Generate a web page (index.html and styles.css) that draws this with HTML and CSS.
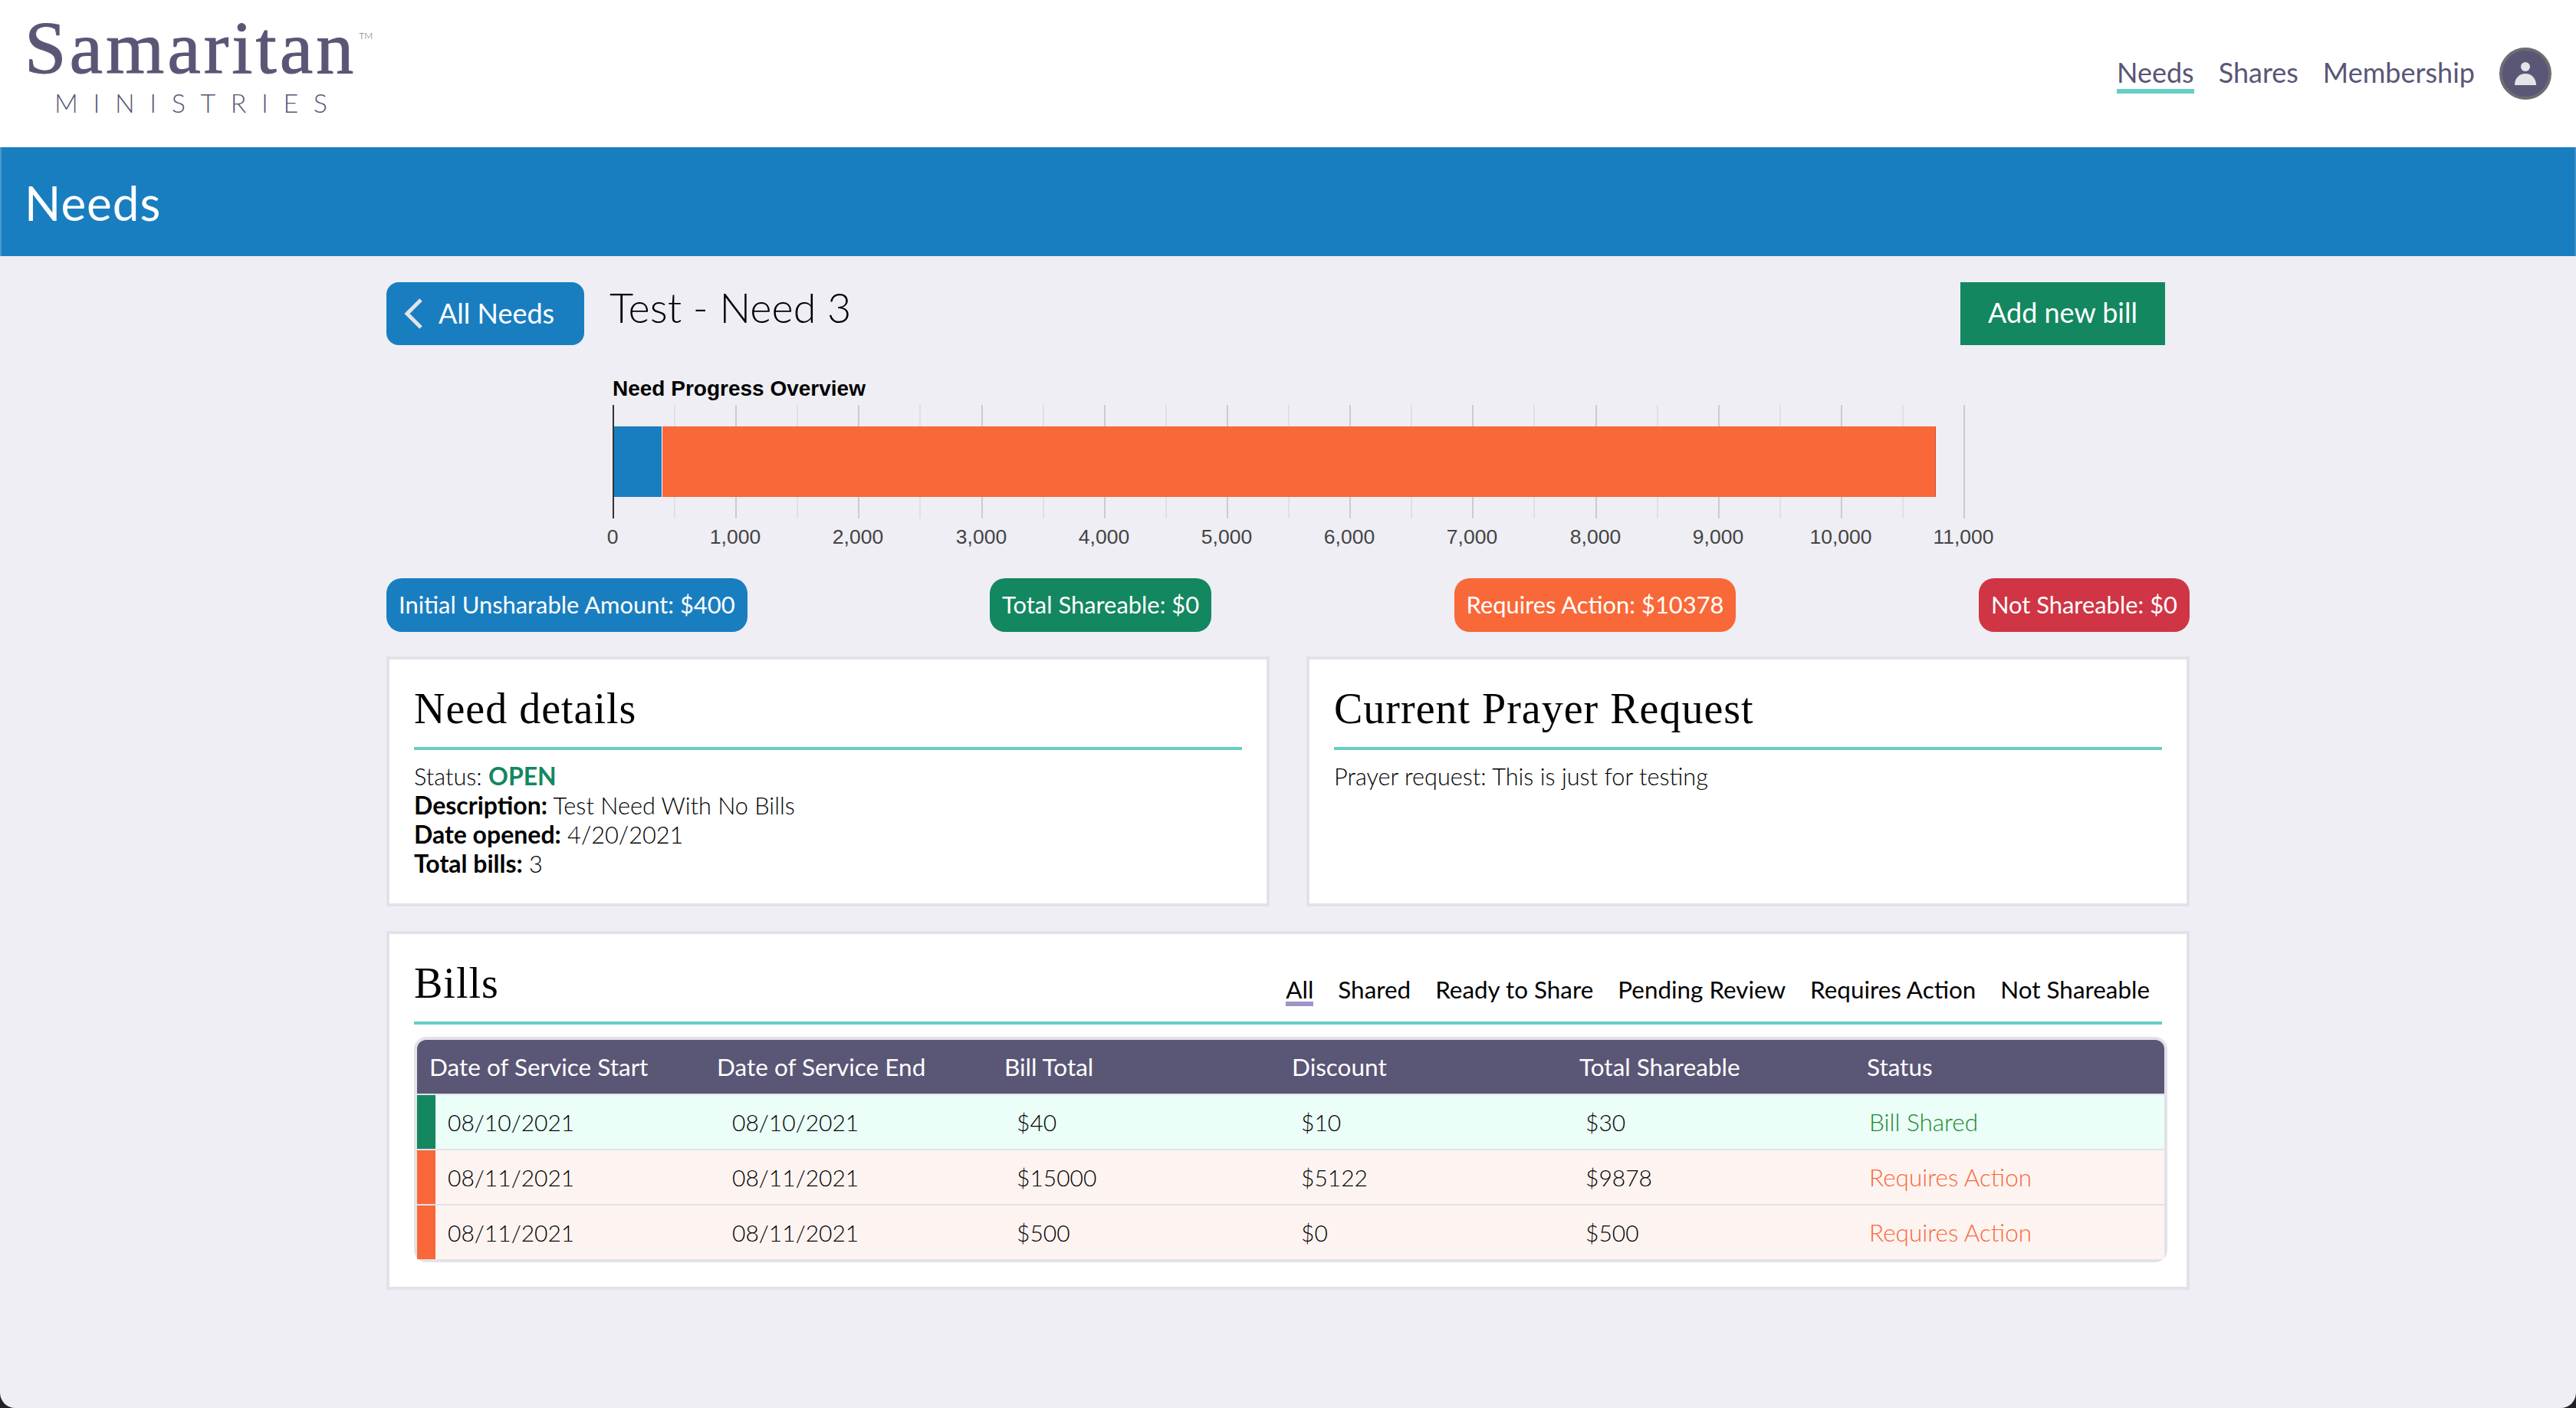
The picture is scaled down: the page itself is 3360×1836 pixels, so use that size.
FILE: index.html
```html
<!DOCTYPE html>
<html lang="en">
<head>
  <meta charset="UTF-8">
  <title>Needs</title>
  <link rel="stylesheet" href="styles.css">
</head>
<body>
  <header class="topbar">
    <div class="logo">
      <div class="logo-name">Samaritan<sup class="logo-tm">TM</sup></div>
      <div class="logo-sub">MINISTRIES</div>
    </div>
    <nav class="nav">
      <a class="nav-link active">Needs</a>
      <a class="nav-link">Shares</a>
      <a class="nav-link">Membership</a>
      <div class="avatar">
        <svg width="28" height="30" viewBox="0 0 28 30">
          <circle cx="14" cy="6" r="6" fill="#e3e3ea"/>
          <path d="M0 30 C0 21 6 15 14 15 C22 15 28 21 28 30 Z" fill="#e3e3ea"/>
        </svg>
      </div>
    </nav>
  </header>

  <div class="banner">Needs</div>

  <main class="content">
    <div class="title-row">
      <a class="back-btn">
        <svg width="26" height="42" viewBox="0 0 26 42">
          <path d="M23 3 L5 21 L23 39" fill="none" stroke="#e3e3ea" stroke-width="5"/>
        </svg>
        All Needs
      </a>
      <h1 class="need-title">Test - Need 3</h1>
      <a class="add-btn">Add new bill</a>
    </div>

    <div class="chart">
      <div class="chart-title">Need Progress Overview</div>
      <div class="plot">
        <span class="grid minor" style="left: 80px"></span>
        <span class="grid" style="left: 160px"></span>
        <span class="grid minor" style="left: 240px"></span>
        <span class="grid" style="left: 320px"></span>
        <span class="grid minor" style="left: 400px"></span>
        <span class="grid" style="left: 481px"></span>
        <span class="grid minor" style="left: 561px"></span>
        <span class="grid" style="left: 641px"></span>
        <span class="grid minor" style="left: 721px"></span>
        <span class="grid" style="left: 801px"></span>
        <span class="grid minor" style="left: 881px"></span>
        <span class="grid" style="left: 961px"></span>
        <span class="grid minor" style="left: 1041px"></span>
        <span class="grid" style="left: 1121px"></span>
        <span class="grid minor" style="left: 1201px"></span>
        <span class="grid" style="left: 1282px"></span>
        <span class="grid minor" style="left: 1362px"></span>
        <span class="grid" style="left: 1442px"></span>
        <span class="grid minor" style="left: 1522px"></span>
        <span class="grid" style="left: 1602px"></span>
        <span class="grid minor" style="left: 1682px"></span>
        <span class="grid" style="left: 1762px"></span>
        <div class="bar">
          <div class="bar-blue" style="width: 65px"></div>
          <div class="bar-orange" style="width: 1661px"></div>
        </div>
        <span class="axis"></span>
      </div>
      <div class="ticks">
        <span class="tick" style="left: 0">0</span>
        <span class="tick" style="left: 160px">1,000</span>
        <span class="tick" style="left: 320px">2,000</span>
        <span class="tick" style="left: 481px">3,000</span>
        <span class="tick" style="left: 641px">4,000</span>
        <span class="tick" style="left: 801px">5,000</span>
        <span class="tick" style="left: 961px">6,000</span>
        <span class="tick" style="left: 1121px">7,000</span>
        <span class="tick" style="left: 1282px">8,000</span>
        <span class="tick" style="left: 1442px">9,000</span>
        <span class="tick" style="left: 1602px">10,000</span>
        <span class="tick" style="left: 1762px">11,000</span>
      </div>
    </div>

    <div class="pills">
      <span class="pill pill-blue">Initial Unsharable Amount: $400</span>
      <span class="pill pill-green">Total Shareable: $0</span>
      <span class="pill pill-orange">Requires Action: $10378</span>
      <span class="pill pill-red">Not Shareable: $0</span>
    </div>

    <div class="cards">
      <section class="card">
        <h2 class="card-title">Need details</h2>
        <div class="details">
          <div>Status: <strong class="open">OPEN</strong></div>
          <div><strong>Description:</strong> Test Need With No Bills</div>
          <div><strong>Date opened:</strong> 4/20/2021</div>
          <div><strong>Total bills:</strong> 3</div>
        </div>
      </section>
      <section class="card">
        <h2 class="card-title">Current Prayer Request</h2>
        <div class="details">Prayer request: This is just for testing</div>
      </section>
    </div>

    <section class="card bills">
      <div class="bills-head">
        <h2 class="bills-title">Bills</h2>
        <div class="filters">
          <a class="filter active">All</a>
          <a class="filter">Shared</a>
          <a class="filter">Ready to Share</a>
          <a class="filter">Pending Review</a>
          <a class="filter">Requires Action</a>
          <a class="filter">Not Shareable</a>
        </div>
      </div>
      <div class="table">
        <div class="thead">
          <div>Date of Service Start</div>
          <div>Date of Service End</div>
          <div>Bill Total</div>
          <div>Discount</div>
          <div>Total Shareable</div>
          <div>Status</div>
        </div>
        <div class="row row-shared">
          <div>08/10/2021</div>
          <div>08/10/2021</div>
          <div>$40</div>
          <div>$10</div>
          <div>$30</div>
          <div class="state">Bill Shared</div>
        </div>
        <div class="row row-action">
          <div>08/11/2021</div>
          <div>08/11/2021</div>
          <div>$15000</div>
          <div>$5122</div>
          <div>$9878</div>
          <div class="state">Requires Action</div>
        </div>
        <div class="row row-action">
          <div>08/11/2021</div>
          <div>08/11/2021</div>
          <div>$500</div>
          <div>$0</div>
          <div>$500</div>
          <div class="state">Requires Action</div>
        </div>
      </div>
    </section>
  </main>
</body>
</html>
```

FILE: styles.css
```css
* {
  box-sizing: border-box;
}

html, body {
  height: 100%;
}

html {
  background-color: #222;
}

body {
  margin: 0;
  background-color: #eeeef4;
  border-radius: 0 0 20px 20px;
  font-family: Lato, 'Open Sans', sans-serif;
  color: #000;
  overflow: hidden;
}

/* top bar */
.topbar {
  height: 192px;
  background-color: #fff;
  display: flex;
  justify-content: space-between;
  padding: 24px 32px 0 32px;
}

.logo {
  color: #5a5676;
}

.logo-name {
  font-family: 'Liberation Serif', serif;
  font-size: 98px;
  line-height: 76px;
  letter-spacing: 4px;
  -webkit-text-stroke: 1px #5a5676;
}

.logo-tm {
  font-family: Lato, sans-serif;
  font-size: 12px;
  font-weight: 300;
  letter-spacing: 0;
  line-height: 0;
  vertical-align: 44px;
  -webkit-text-stroke: 0;
  margin-left: 3px;
}

.logo-sub {
  font-weight: 300;
  font-size: 34px;
  line-height: 40px;
  letter-spacing: 19.6px;
  padding-left: 39px;
  margin-top: 14px;
}

.nav {
  display: flex;
  align-items: flex-start;
  gap: 32px;
  padding-top: 38px;
  color: #5a5676;
  font-size: 36px;
}

.nav-link {
  height: 60px;
  padding-top: 11px;
  line-height: 43px;
  border-bottom: 6px solid transparent;
}

.nav-link.active {
  border-bottom-color: #67cdc7;
}

.avatar {
  width: 68px;
  height: 68px;
  border-radius: 50%;
  background-color: #5a5676;
  border: 4px solid #6c6c72;
  display: flex;
  align-items: center;
  justify-content: center;
}

/* blue page banner */
.banner {
  height: 142px;
  background-color: #197ec0;
  border-left: 2px solid #4a97cc;
  border-right: 2px solid #3d90c8;
  color: #fff;
  font-size: 62px;
  letter-spacing: 1px;
  line-height: 144px;
  padding-left: 30px;
}

.content {
  width: 2352px;
  margin-left: 504px;
  padding-top: 34px;
}

.title-row {
  display: flex;
  align-items: flex-start;
  padding-right: 32px;
}

.back-btn {
  width: 258px;
  height: 82px;
  background-color: #197ec0;
  color: #fff;
  border-radius: 16px;
  font-size: 36px;
  display: flex;
  align-items: center;
  gap: 20px;
  padding: 0 0 3px 22px;
}

.back-btn svg {
  margin-top: 3px;
}

.need-title {
  flex: 1;
  margin: 0 0 0 33px;
  font-size: 54px;
  font-weight: 300;
  line-height: 66px;
}

.add-btn {
  width: 267px;
  height: 82px;
  background-color: #13875f;
  color: #fff;
  font-size: 36px;
  line-height: 79px;
  text-align: center;
}

/* chart */
.chart {
  margin-top: 40px;
  margin-left: 295px;
  height: 244px;
}

.chart-title {
  font-family: 'Liberation Sans', sans-serif;
  font-weight: bold;
  font-size: 28px;
  line-height: 34px;
  height: 38px;
}

.plot {
  position: relative;
  height: 148px;
}

.grid {
  position: absolute;
  top: 0;
  bottom: 0;
  width: 2px;
  background-color: #ccc;
}

.grid.minor {
  background-color: #e0e0e4;
}

.axis {
  position: absolute;
  left: 0;
  top: 0;
  bottom: 0;
  width: 2px;
  background-color: #333;
}

.bar {
  position: absolute;
  left: 0;
  top: 28px;
  height: 92px;
  display: flex;
}

.bar-blue {
  background-color: #197ec0;
  border-right: 1px solid #fff;
}

.bar-orange {
  background-color: #f96838;
  border-right: 1px solid #d84a2a;
}

.ticks {
  position: relative;
  height: 40px;
  margin-top: 4px;
}

.tick {
  position: absolute;
  top: 0;
  transform: translateX(-50%);
  font-family: 'Liberation Sans', sans-serif;
  font-size: 26.5px;
  line-height: 40px;
  color: #444;
}

/* summary pills */
.pills {
  display: flex;
  justify-content: space-between;
  margin-top: 20px;
}

.pill {
  height: 70px;
  border-radius: 20px;
  color: #fff;
  font-size: 30.9px;
  line-height: 70px;
  padding: 0 16px;
}

.pill-blue {
  background-color: #197ec0;
}

.pill-green {
  background-color: #13875f;
}

.pill-orange {
  background-color: #f96838;
}

.pill-red {
  background-color: #cf3545;
}

/* cards */
.cards {
  display: flex;
  gap: 48px;
  margin-top: 32px;
}

.card {
  flex: 1;
  height: 326px;
  background-color: #fff;
  border: 4px solid #e2e2e9;
  padding: 0 32px;
}

.card-title {
  margin: 0;
  height: 118px;
  padding-top: 11px;
  border-bottom: 4px solid #67cdc7;
  font-family: 'Liberation Serif', serif;
  font-weight: normal;
  font-size: 56px;
  line-height: 106px;
  letter-spacing: 1px;
}

.details {
  margin-top: 16px;
  font-size: 30.7px;
  font-weight: 300;
  line-height: 38px;
}

.details strong {
  font-size: 32px;
  font-weight: 700;
  line-height: 1;
}

.open {
  color: #13875f;
}

/* bills table */
.bills {
  height: 468px;
  margin-top: 32px;
}

.bills-head {
  height: 118px;
  border-bottom: 4px solid #67cdc7;
  display: flex;
  justify-content: space-between;
}

.bills-title {
  margin: 0;
  padding-top: 11px;
  font-family: 'Liberation Serif', serif;
  font-weight: normal;
  font-size: 56px;
  line-height: 106px;
  letter-spacing: 1px;
}

.filters {
  display: flex;
  gap: 32px;
  padding-top: 52px;
  padding-right: 16px;
  font-size: 31.4px;
}

.filter {
  height: 42px;
  line-height: 40px;
  border-bottom: 6px solid transparent;
}

.filter.active {
  border-bottom-color: #a094c8;
}

.table {
  margin-top: 16px;
  width: 2287px;
  border: 4px solid #e2e2e9;
  border-radius: 16px;
  background-color: #e2e2e9;
}

.thead {
  display: grid;
  grid-template-columns: repeat(5, 375px) 1fr;
  height: 70px;
  background-color: #5a5676;
  color: #fff;
  font-size: 31.5px;
  line-height: 70px;
  border-radius: 12px 12px 0 0;
}

.thead div {
  padding-left: 16px;
}

.row {
  display: grid;
  grid-template-columns: repeat(5, 371px) 1fr;
  height: 70px;
  margin-top: 2px;
  font-size: 30px;
  font-weight: 300;
  line-height: 70px;
  border-left: 24px solid;
}

.row div {
  padding-left: 16px;
}

.row .state {
  font-size: 31.5px;
  padding-left: 15px;
}

.row-shared {
  background-color: #ebfef8;
  border-left-color: #13875f;
}

.row-shared .state {
  color: #1a8a2a;
}

.row-action {
  background-color: #fdf4f1;
  border-left-color: #f96838;
}

.row-action .state {
  color: #f96838;
}
```
